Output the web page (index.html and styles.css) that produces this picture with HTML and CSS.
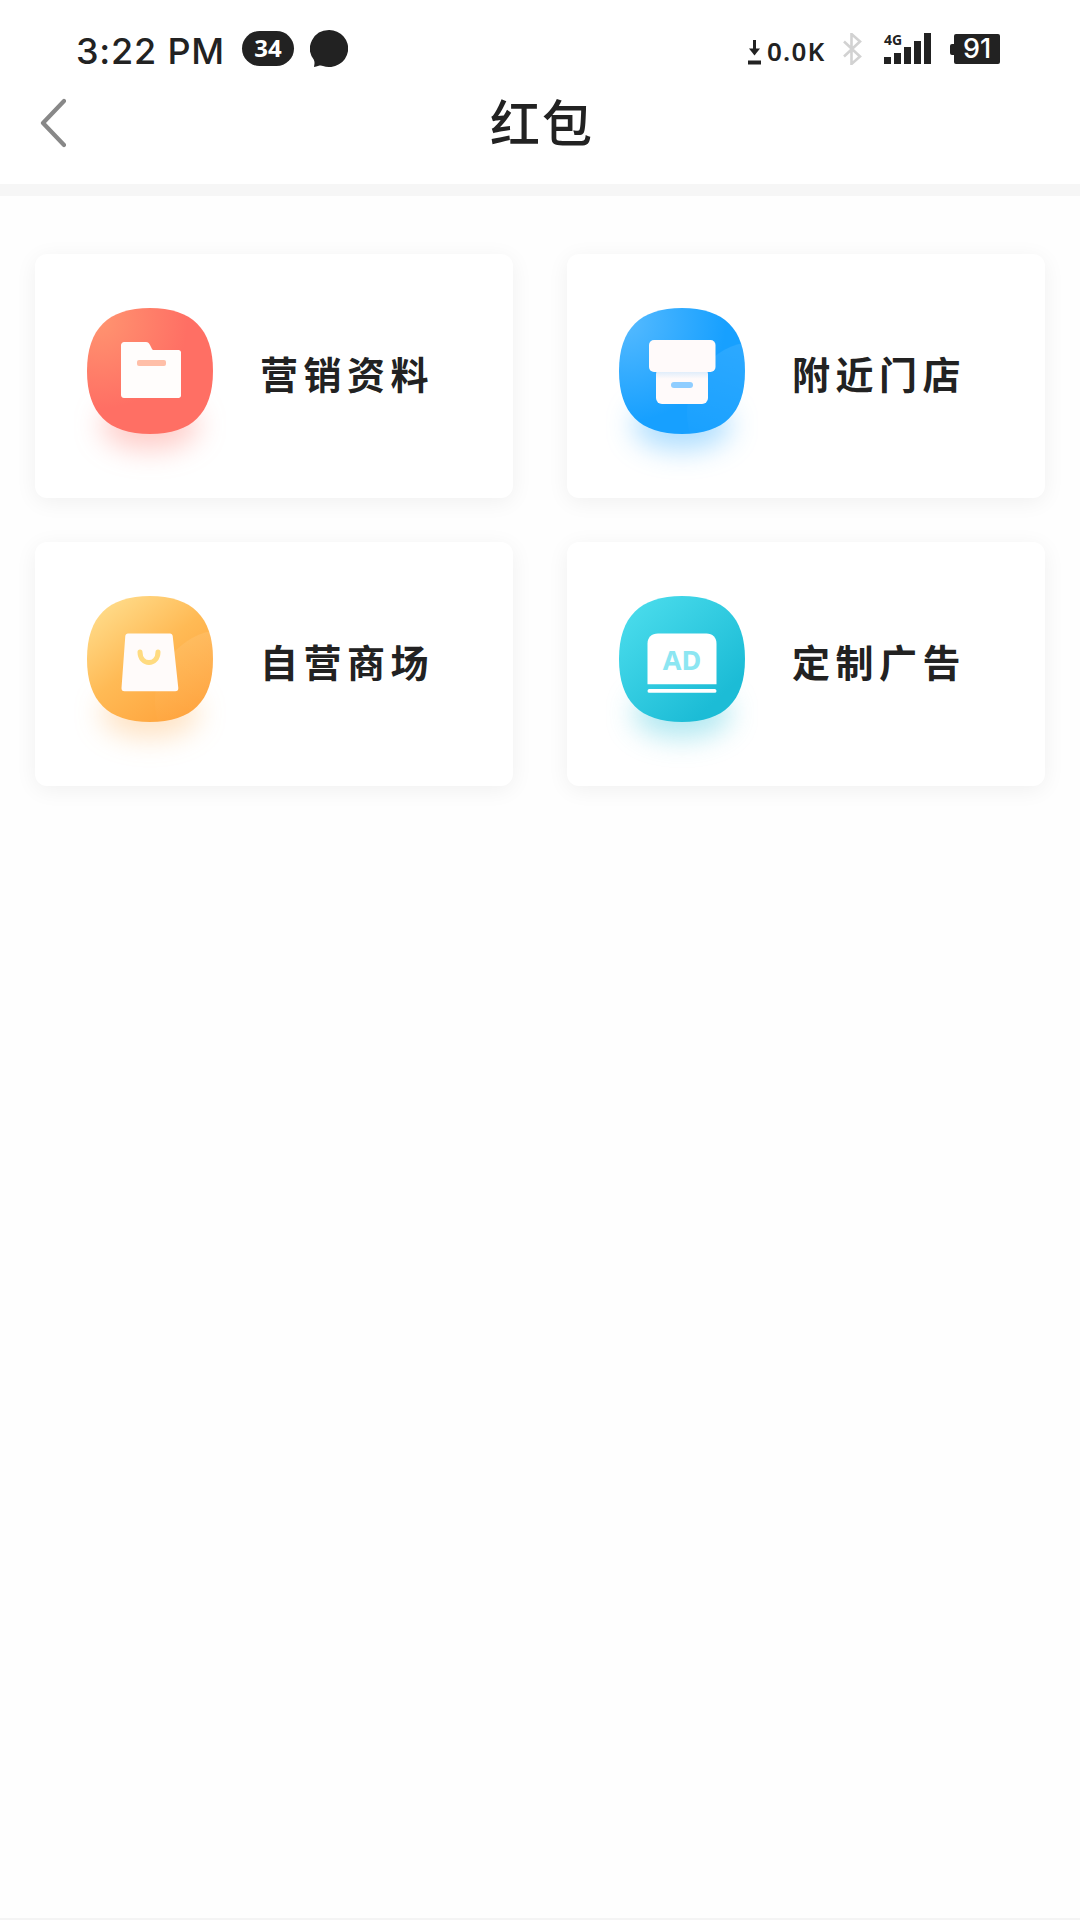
FILE: index.html
```html
<!DOCTYPE html>
<html lang="zh">
<head>
    <meta charset="UTF-8">
    <meta name="viewport" content="width=device-width, initial-scale=1.0">
    <title>红包</title>
    <link rel="stylesheet" href="styles.css">
</head>
<body>

    <!-- Status bar -->
    <div class="status-bar">
        <div class="status-left">
            <span class="time">3:22 PM</span>
            <span class="badge">34</span>
            <svg class="bubble" width="38" height="37" viewBox="0 0 38 37">
                <path d="M19 0a19 18.500 0 1 1-6 36c-2-1-4-.5-9 1 .7-4 .8-5-.3-7.500A19 18.500 0 0 1 19 0z" fill="#222"/>
            </svg>
        </div>
        <div class="status-right">
            <svg class="down-arrow" width="13" height="26" viewBox="0 0 13 26">
                <rect x="5" y="1" width="3" height="10" fill="#222"/>
                <path d="M1 9.500h11l-5.500 7z" fill="#222"/>
                <rect y="21.500" width="13" height="4" fill="#222"/>
            </svg>
            <span class="speed">0.0K</span>
            <svg class="bluetooth" width="20" height="32" viewBox="0 0 20 32">
                <path d="M2 8.500l16 15L9.500 31V1L18 8.500l-16 15" fill="none" stroke="#d2d2d2" stroke-width="2.600"/>
            </svg>
            <div class="signal">
                <span class="net">4G</span>
                <div class="bars">
                    <i class="bar b1"></i>
                    <i class="bar b2"></i>
                    <i class="bar b3"></i>
                    <i class="bar b4"></i>
                    <i class="bar b5"></i>
                </div>
            </div>
            <div class="battery">
                <i class="battery-nub"></i>
                <span class="battery-body">91</span>
            </div>
        </div>
    </div>

    <!-- Header -->
    <div class="header">
        <svg class="back" width="26" height="50" viewBox="0 0 26 50">
            <path d="M24 3L3 25l21 22" fill="none" stroke="#888" stroke-width="4.200" stroke-linecap="round" stroke-linejoin="round"/>
        </svg>
        <h1>红包</h1>
    </div>
    <div class="divider"></div>

    <!-- Menu cards -->
    <div class="menu-grid">

        <div class="card">
            <div class="icon-wrap glow-red">
                <svg class="icon" width="126" height="126" viewBox="0 0 126 126">
                    <defs>
                        <radialGradient id="gradRed" cx="0.1" cy="0.1" r="0.7">
                            <stop offset="0" stop-color="#ff9470"/>
                            <stop offset="1" stop-color="#ff6f64"/>
                        </radialGradient>
                    </defs>
                    <path d="M63 0C105 0 126 21 126 63S105 126 63 126 0 105 0 63 21 0 63 0z" fill="url(#gradRed)"/>
                    <path d="M37 34h22c2 0 3 1 4 3l2 4c.4.800 1 1 2 1h24.500c1.500 0 2.500 1 2.500 2.500v43c0 1.500-1 2.500-2.500 2.500H37c-1.500 0-3-1.200-3-3V37c0-1.500 1.500-3 3-3z" fill="#fffdfc"/>
                    <rect x="50" y="52" width="29" height="6" rx="2" fill="#ffbfa8"/>
                </svg>
            </div>
            <span class="card-label">营销资料</span>
        </div>

        <div class="card">
            <div class="icon-wrap glow-blue">
                <svg class="icon" width="126" height="126" viewBox="0 0 126 126">
                    <defs>
                        <radialGradient id="gradBlue" cx="0.05" cy="0.1" r="0.8">
                            <stop offset="0" stop-color="#55baff"/>
                            <stop offset="1" stop-color="#17a0ff"/>
                        </radialGradient>
                        <linearGradient id="gradBox" x1="0" y1="0" x2="0" y2="1">
                            <stop offset="0" stop-color="#cfe6fb"/>
                            <stop offset="0.3" stop-color="#fffafa"/>
                        </linearGradient>
                        <linearGradient id="gradSheen" x1="0.5" y1="0" x2="0.2" y2="0.8">
                            <stop offset="0" stop-color="#fff" stop-opacity="0.1"/>
                            <stop offset="1" stop-color="#fff" stop-opacity="0"/>
                        </linearGradient>
                        <clipPath id="squircle">
                            <path d="M63 0C105 0 126 21 126 63S105 126 63 126 0 105 0 63 21 0 63 0z"/>
                        </clipPath>
                    </defs>
                    <path d="M63 0C105 0 126 21 126 63S105 126 63 126 0 105 0 63 21 0 63 0z" fill="url(#gradBlue)"/>
                    <circle cx="140" cy="105" r="72" fill="url(#gradSheen)" clip-path="url(#squircle)"/>
                    <rect x="37" y="60" width="52" height="36" rx="6" fill="url(#gradBox)"/>
                    <rect x="30" y="32" width="66.500" height="32" rx="5" fill="#fffafa"/>
                    <rect x="52" y="74" width="22" height="6" rx="3" fill="#8fcdff"/>
                </svg>
            </div>
            <span class="card-label">附近门店</span>
        </div>

        <div class="card">
            <div class="icon-wrap glow-orange">
                <svg class="icon" width="126" height="126" viewBox="0 0 126 126">
                    <defs>
                        <linearGradient id="gradOrange" x1="0.1" y1="0.05" x2="0.8" y2="0.95">
                            <stop offset="0" stop-color="#ffdd8c"/>
                            <stop offset="0.5" stop-color="#ffba55"/>
                            <stop offset="1" stop-color="#ffa33c"/>
                        </linearGradient>
                    </defs>
                    <path d="M63 0C105 0 126 21 126 63S105 126 63 126 0 105 0 63 21 0 63 0z" fill="url(#gradOrange)"/>
                    <circle cx="140" cy="105" r="72" fill="url(#gradSheen)" clip-path="url(#squircle)"/>
                    <path d="M41 37.500h42c1.500 0 2.500 1 2.700 2.500l5.600 52c.2 2-1 3.300-3 3.300H37.500c-2 0-3.200-1.300-3-3.300L38.300 40c.2-1.500 1.200-2.500 2.700-2.500z" fill="#fffbfa"/>
                    <path d="M53 56c0 14 18 14 18 0" fill="none" stroke="#ffdb80" stroke-width="5" stroke-linecap="round"/>
                </svg>
            </div>
            <span class="card-label">自营商场</span>
        </div>

        <div class="card">
            <div class="icon-wrap glow-teal">
                <svg class="icon" width="126" height="126" viewBox="0 0 126 126">
                    <defs>
                        <linearGradient id="gradTeal" x1="0.05" y1="0.1" x2="0.75" y2="0.85">
                            <stop offset="0" stop-color="#4adcec"/>
                            <stop offset="1" stop-color="#1cbcd6"/>
                        </linearGradient>
                    </defs>
                    <path d="M63 0C105 0 126 21 126 63S105 126 63 126 0 105 0 63 21 0 63 0z" fill="url(#gradTeal)"/>
                    <path d="M39 37.500h48.500c6 0 10 4 10 10v40.800h-69V47.500c0-6 4-10 10.500-10z" fill="#fff"/>
                    <rect x="28.500" y="93" width="69" height="3.800" rx="1.900" fill="#fff"/>
                    <text class="ad-text" x="63" y="73.500" text-anchor="middle">AD</text>
                </svg>
            </div>
            <span class="card-label">定制广告</span>
        </div>

    </div>

    <div class="bottom-line"></div>

</body>
</html>
```

FILE: styles.css
```css
/* General */
body {
    margin: 0;
    padding: 0;
    width: 1080px;
    height: 1920px;
    overflow: hidden;
    display: flex;
    flex-direction: column;
    background-color: #fefefe;
    color: #222;
    font-family: "Noto Sans CJK SC", "Noto Sans", sans-serif;
}

/* Status bar */
.status-bar {
    height: 78px;
    padding: 30px 80px 0 76px;
    box-sizing: border-box;
    display: flex;
    justify-content: space-between;
    align-items: flex-start;
    background-color: #fff;
}

.status-left {
    display: flex;
    align-items: center;
    height: 36px;
}

.time {
    width: 151px;
    font-family: Inter, "Liberation Sans", sans-serif;
    font-size: 36px;
    font-weight: 500;
    line-height: 36px;
    letter-spacing: 0.8px;
    margin-top: 5px;
    white-space: nowrap;
    color: #222;
}

.badge {
    width: 52px;
    height: 35px;
    margin-left: 15px;
    border-radius: 18px;
    background-color: #222;
    color: #fff;
    font-family: "Noto Sans", sans-serif;
    font-size: 24px;
    font-weight: 700;
    line-height: 33px;
    text-align: center;
}

.bubble {
    margin-left: 16px;
}

.status-right {
    display: flex;
    align-items: flex-start;
    height: 36px;
}

.down-arrow {
    margin: 9px 6px 0 0;
}

.speed {
    width: 60px;
    font-family: "Noto Sans", sans-serif;
    font-size: 26px;
    font-weight: 600;
    line-height: 26px;
    letter-spacing: 1.2px;
    margin-top: 8px;
}

.bluetooth {
    margin: 3px 0 0 15px;
}

.signal {
    width: 47px;
    height: 31px;
    margin: 3px 0 0 22px;
    position: relative;
}

.net {
    position: absolute;
    left: 0;
    top: 0;
    font-family: "Noto Sans", sans-serif;
    font-size: 14px;
    font-weight: 700;
    line-height: 13px;
}

.bars {
    height: 31px;
    display: flex;
    align-items: flex-end;
    gap: 3px;
}

.bar {
    display: block;
    width: 7px;
    background-color: #222;
}

.b1 { height: 7px; }
.b2 { height: 11px; }
.b3 { height: 17px; }
.b4 { height: 23px; }
.b5 { height: 31px; }

.battery {
    display: flex;
    align-items: center;
    margin: 4px 0 0 19px;
}

.battery-nub {
    display: block;
    width: 4px;
    height: 11px;
    background-color: #222;
    border-radius: 2px 0 0 2px;
}

.battery-body {
    width: 46px;
    height: 30px;
    border-radius: 2px;
    background-color: #222;
    color: #fff;
    font-family: Inter, "Noto Sans", sans-serif;
    font-size: 27px;
    font-weight: 500;
    line-height: 30px;
    text-align: center;
}

/* Header */
.header {
    height: 106px;
    position: relative;
    display: flex;
    align-items: center;
    justify-content: center;
    background-color: #fff;
}

.header h1 {
    margin: 0 0 22px 4px;
    font-size: 50px;
    font-weight: 500;
    line-height: 60px;
    letter-spacing: 2px;
    color: #222;
}

.back {
    position: absolute;
    left: 40px;
    top: 20px;
}

.divider {
    height: 12px;
    background-color: #f6f6f6;
}

/* Menu cards */
.menu-grid {
    display: grid;
    grid-template-columns: 478px 478px;
    grid-auto-rows: 244px;
    column-gap: 54px;
    row-gap: 44px;
    padding: 58px 35px 0;
}

.card {
    display: flex;
    align-items: flex-start;
    padding: 54px 0 0 52px;
    box-sizing: border-box;
    border-radius: 12px;
    background-color: #fff;
    box-shadow: 0 4px 22px rgba(0, 0, 0, 0.06);
}

.card-label {
    margin: 38px 0 0 47px;
    font-size: 38px;
    font-weight: 700;
    line-height: 54px;
    letter-spacing: 5.5px;
    color: #222;
}

/* Icon tiles */
.icon-wrap {
    flex: none;
    width: 126px;
    height: 126px;
    position: relative;
}

.icon-wrap::before {
    content: "";
    position: absolute;
    left: 14px;
    right: 14px;
    bottom: -16px;
    height: 50px;
    border-radius: 50%;
    filter: blur(14px);
}

.glow-red::before { background-color: rgba(255, 111, 100, 0.35); }
.glow-blue::before { background-color: rgba(23, 160, 255, 0.35); }
.glow-orange::before { background-color: rgba(255, 163, 60, 0.3); }
.glow-teal::before { background-color: rgba(28, 188, 214, 0.35); }

.icon {
    display: block;
    position: relative;
}

.ad-text {
    font-family: "Noto Sans", sans-serif;
    font-size: 27px;
    font-weight: 700;
    fill: #8ce6f2;
}

.bottom-line {
    height: 2px;
    margin-top: auto;
    background-color: #f4f4f4;
}
```
